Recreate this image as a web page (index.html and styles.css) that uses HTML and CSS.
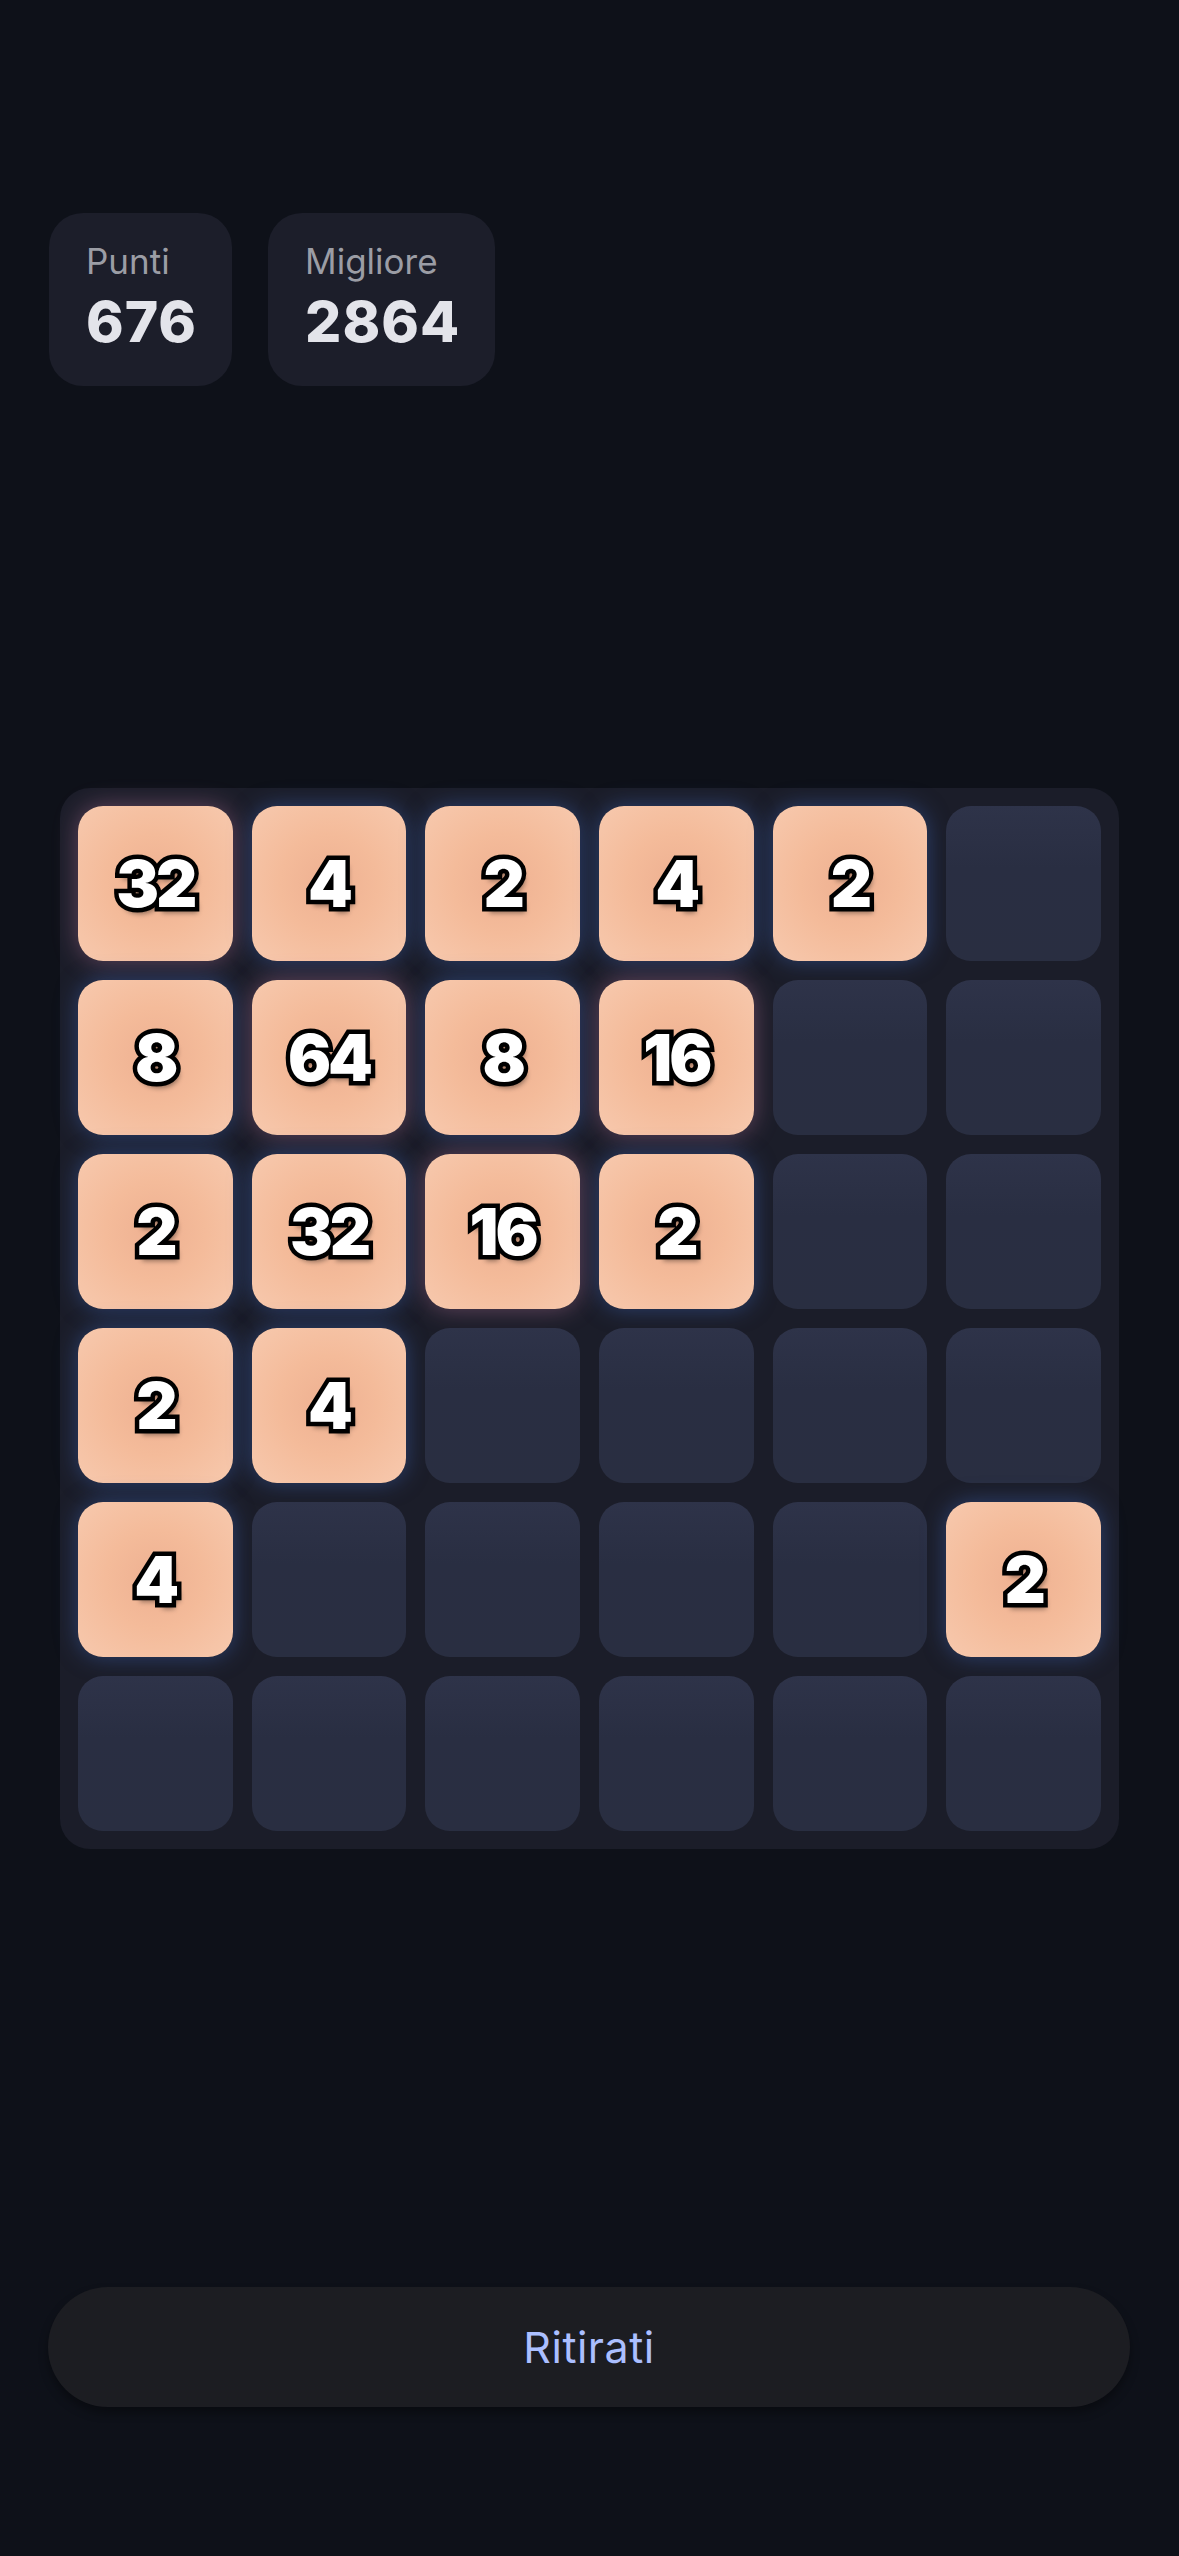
FILE: index.html
```html
<!doctype html>
<html lang="it">
<head>
    <meta charset="UTF-8">
    <meta name="viewport" content="width=device-width, initial-scale=1.0">
    <title>2048</title>
    <link rel="stylesheet" href="styles.css">
</head>
<body>

<div class="app">
    <!-- Score boxes -->
    <div class="scores">
        <div class="score-box">
            <div class="score-label">Punti</div>
            <div class="score-value">676</div>
        </div>
        <div class="score-box">
            <div class="score-label">Migliore</div>
            <div class="score-value">2864</div>
        </div>
    </div>

    <!-- Board -->
    <div class="board">
        <div class="cell tile hot">32</div>
        <div class="cell tile">4</div>
        <div class="cell tile">2</div>
        <div class="cell tile">4</div>
        <div class="cell tile">2</div>
        <div class="cell"></div>

        <div class="cell tile">8</div>
        <div class="cell tile hot">64</div>
        <div class="cell tile">8</div>
        <div class="cell tile hot">16</div>
        <div class="cell"></div>
        <div class="cell"></div>

        <div class="cell tile">2</div>
        <div class="cell tile">32</div>
        <div class="cell tile hot">16</div>
        <div class="cell tile">2</div>
        <div class="cell"></div>
        <div class="cell"></div>

        <div class="cell tile">2</div>
        <div class="cell tile">4</div>
        <div class="cell"></div>
        <div class="cell"></div>
        <div class="cell"></div>
        <div class="cell"></div>

        <div class="cell tile">4</div>
        <div class="cell"></div>
        <div class="cell"></div>
        <div class="cell"></div>
        <div class="cell"></div>
        <div class="cell tile">2</div>

        <div class="cell"></div>
        <div class="cell"></div>
        <div class="cell"></div>
        <div class="cell"></div>
        <div class="cell"></div>
        <div class="cell"></div>
    </div>

    <button class="quit-btn">Ritirati</button>
</div>

</body>
</html>
```

FILE: styles.css
```css
body {
    margin: 0;
    background-color: #0e1119;
    font-family: Inter, "Noto Sans", sans-serif;
}
.app {
    width: 1179px;
    height: 2556px;
    padding-top: 213px;
    box-sizing: border-box;
}
.scores {
    display: flex;
    gap: 36px;
    margin: 0 49px;
}
.score-box {
    background-color: #1c1e2a;
    border-radius: 34px;
    padding: 27px 35px 30px 37px;
}
.score-label {
    font-size: 35px;
    line-height: 1.2;
    color: #9b9da5;
    margin-bottom: 6px;
}
.score-value {
    font-size: 57px;
    line-height: 1.2;
    font-weight: 800;
    letter-spacing: 1px;
    color: #e3e4ea;
}
.board {
    margin: 402px 60px 0;
    padding: 18px;
    background-color: #1b1d29;
    border-radius: 30px;
    display: grid;
    grid-template-columns: repeat(6, 1fr);
    gap: 19px;
}
.cell {
    height: 155px;
    border-radius: 25px;
    background: linear-gradient(180deg, #2e3349 0%, #292e42 40%, #292e41 100%);
}
.tile {
    background: radial-gradient(circle at 50% 50%, #eeb091 0%, #f4bb9a 45%, #f7c9ae 100%);
    box-shadow: 0 0 22px rgba(60, 95, 170, 0.55);
    display: flex;
    align-items: center;
    justify-content: center;
    font-family: Inter, "DejaVu Sans", sans-serif;
    font-weight: 900;
    font-size: 64px;
    color: #ffffff;
    -webkit-text-stroke: 9px #000000;
    paint-order: stroke fill;
    text-shadow: 3px 6px 5px rgba(0, 0, 0, 0.4);
    letter-spacing: -3px;
}
.tile.hot {
    box-shadow: 0 0 24px rgba(190, 120, 160, 0.45);
}
.quit-btn {
    display: block;
    width: 1082px;
    height: 120px;
    margin: 438px 0 0 48px;
    border: none;
    border-radius: 60px;
    background-color: #1c1d22;
    color: #abbfff;
    font-family: Inter, "Noto Sans", sans-serif;
    font-size: 43px;
    letter-spacing: 0.5px;
    box-shadow: 0 6px 10px rgba(0, 0, 0, 0.35);
    cursor: pointer;
}
```
